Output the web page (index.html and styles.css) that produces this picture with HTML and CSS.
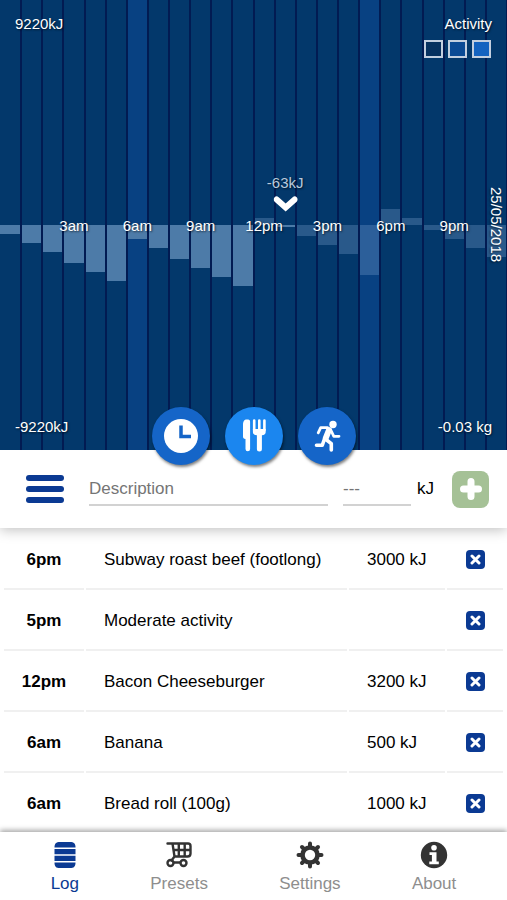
FILE: index.html
```
<!DOCTYPE html>
<html lang="en">
<head>
    <meta charset="UTF-8">
    <meta name="viewport" content="width=device-width, initial-scale=1.0">
    <title>Energy Log</title>
    <link rel="stylesheet" href="styles.css">
</head>
<body>
    <section class="chart">
        <div class="hours">
            <div class="hour"><div class="bar" style="height: 4%"></div></div>
            <div class="hour"><div class="bar" style="height: 8%"></div></div>
            <div class="hour"><div class="bar" style="height: 12%"></div></div>
            <div class="hour"><div class="bar" style="height: 17%"></div><span class="hour-label">3am</span></div>
            <div class="hour"><div class="bar" style="height: 21%"></div></div>
            <div class="hour"><div class="bar" style="height: 25%"></div></div>
            <div class="hour active"><div class="bar" style="height: 6%"></div><span class="hour-label">6am</span></div>
            <div class="hour"><div class="bar" style="height: 10%"></div></div>
            <div class="hour"><div class="bar" style="height: 15%"></div></div>
            <div class="hour"><div class="bar" style="height: 19%"></div><span class="hour-label">9am</span></div>
            <div class="hour"><div class="bar" style="height: 23%"></div></div>
            <div class="hour"><div class="bar" style="height: 27%"></div></div>
            <div class="hour"><div class="bar up future" style="height: 3%"></div><span class="hour-label">12pm</span></div>
            <div class="hour">
                <div class="bar" style="height: 1%"></div>
                <div class="marker">
                    <span>-63kJ</span>
                    <svg width="24" height="16" viewBox="0 0 24 16"><path d="M3 3.5 12 11.5 21 3.5" fill="none" stroke="#fff" stroke-width="6" stroke-linecap="round"/></svg>
                </div>
            </div>
            <div class="hour"><div class="bar future" style="height: 5%"></div></div>
            <div class="hour"><div class="bar future" style="height: 9%"></div><span class="hour-label">3pm</span></div>
            <div class="hour"><div class="bar future" style="height: 13%"></div></div>
            <div class="hour active"><div class="bar future" style="height: 22%"></div></div>
            <div class="hour"><div class="bar up future" style="height: 7%"></div><span class="hour-label">6pm</span></div>
            <div class="hour"><div class="bar up future" style="height: 3%"></div></div>
            <div class="hour"><div class="bar future" style="height: 2%"></div></div>
            <div class="hour"><div class="bar future" style="height: 6%"></div><span class="hour-label">9pm</span></div>
            <div class="hour"><div class="bar future" style="height: 10%"></div></div>
            <div class="hour"><div class="bar future" style="height: 14%"></div></div>
        </div>
        <div class="overlay">
            <div class="overlay-row">
                <span>9220kJ</span>
                <div class="legend">
                    <span>Activity</span>
                    <div class="swatches">
                        <i class="swatch"></i>
                        <i class="swatch medium"></i>
                        <i class="swatch high"></i>
                    </div>
                </div>
            </div>
            <div class="overlay-row">
                <span>-9220kJ</span>
                <span>-0.03 kg</span>
            </div>
        </div>
        <div class="date"><span>25/05/2018</span></div>
        <div class="actions">
            <button class="round" type="button" aria-label="Time">
                <svg width="36" height="36" viewBox="0 0 36 36"><circle cx="18" cy="18" r="17" fill="#fff"/><path d="M18 7.5V18.5H28" fill="none" stroke="#1565c8" stroke-width="3.5"/></svg>
            </button>
            <button class="round food" type="button" aria-label="Food">
                <svg width="36" height="36" viewBox="0 0 36 36" fill="#fff"><path d="M11 1.5C8 1.500 7 3.500 7 7v11.500c0 1.500.7 2.300 2.500 2.500V31a2.300 2.300 0 0 0 4.600 0V3.500c0-1.400-1-2-3.100-2z"/><path d="M18.200 2.500V12M23.300 2.500V12M28.400 2.500V12" fill="none" stroke="#fff" stroke-width="2.600" stroke-linecap="round"/><path d="M16.900 11h12.800v3c0 2-1.200 3-3.800 3.300V31a2.500 2.500 0 0 1-5 0V17.300c-2.800-.3-4-1.300-4-3.300z"/></svg>
            </button>
            <button class="round" type="button" aria-label="Activity">
                <svg width="36" height="36" viewBox="0 0 36 36" fill="none" stroke="#fff" stroke-linecap="round" stroke-linejoin="round"><circle cx="24" cy="6.500" r="3.700" fill="#fff" stroke="none"/><path d="M20 12 16.800 20" stroke-width="6"/><path d="M18.500 9.700H11.700L9.200 14.800M22.300 13 24.800 18.300H30" stroke-width="2.800"/><path d="M15.300 21.500 13.300 27.200H7.500M17 21.500 22.300 25.700V32" stroke-width="3.600"/></svg>
            </button>
        </div>
    </section>
    <form class="entry">
        <button class="menu" type="button" aria-label="Menu"><i></i><i></i><i></i></button>
        <input class="description" type="text" placeholder="Description" aria-label="Description">
        <input class="energy" id="energy" type="text" placeholder="---">
        <label for="energy">kJ</label>
        <button class="add" type="submit" aria-label="Add">
            <svg width="24" height="24" viewBox="0 0 24 24"><path d="M12 4.500v15M4.500 12h15" stroke="#fff" stroke-width="7" stroke-linecap="round"/></svg>
        </button>
    </form>
    <main class="log">
        <table>
            <tr>
                <th scope="row">6pm</th>
                <td>Subway roast beef (footlong)</td>
                <td class="amount">3000 kJ</td>
                <td class="remove"><button type="button" aria-label="Remove"><svg width="11" height="11" viewBox="0 0 11 11"><path d="M2 2 9 9M9 2 2 9"/></svg></button></td>
            </tr>
            <tr>
                <th scope="row">5pm</th>
                <td>Moderate activity</td>
                <td class="amount"></td>
                <td class="remove"><button type="button" aria-label="Remove"><svg width="11" height="11" viewBox="0 0 11 11"><path d="M2 2 9 9M9 2 2 9"/></svg></button></td>
            </tr>
            <tr>
                <th scope="row">12pm</th>
                <td>Bacon Cheeseburger</td>
                <td class="amount">3200 kJ</td>
                <td class="remove"><button type="button" aria-label="Remove"><svg width="11" height="11" viewBox="0 0 11 11"><path d="M2 2 9 9M9 2 2 9"/></svg></button></td>
            </tr>
            <tr>
                <th scope="row">6am</th>
                <td>Banana</td>
                <td class="amount">500 kJ</td>
                <td class="remove"><button type="button" aria-label="Remove"><svg width="11" height="11" viewBox="0 0 11 11"><path d="M2 2 9 9M9 2 2 9"/></svg></button></td>
            </tr>
            <tr>
                <th scope="row">6am</th>
                <td>Bread roll (100g)</td>
                <td class="amount">1000 kJ</td>
                <td class="remove"><button type="button" aria-label="Remove"><svg width="11" height="11" viewBox="0 0 11 11"><path d="M2 2 9 9M9 2 2 9"/></svg></button></td>
            </tr>
        </table>
    </main>
    <nav class="tabs">
        <a class="current" href="#log">
            <svg width="28" height="28" viewBox="0 0 28 28" fill="#0b3a93"><path d="M3.500 6.500C3.500 2.500 5 1 9 1h10c4 0 5.500 1.500 5.500 5.500z"/><path d="M3.500 8h21v5.200h-21zM3.500 14.700h21v5.200h-21zM3.500 21.400h21c0 4-1.500 5.600-5.500 5.600H9c-4 0-5.500-1.600-5.500-5.600z"/></svg>
            <span>Log</span>
        </a>
        <a href="#presets">
            <svg width="28" height="28" viewBox="0 0 28 28" fill="none" stroke="#333" stroke-width="2.400" stroke-linecap="round" stroke-linejoin="round"><path d="M2.500 2.500H23Q25.500 2.500 25.500 5V12.500Q25.500 15.500 22.500 15.500H9.500L7.500 2.500M8.500 9H25.500M13.800 2.500V15.500M19.700 2.500V15.500M9.500 15.500 6.500 19.500M9 21.500H15"/><circle cx="5.500" cy="22" r="3"/><circle cx="18.500" cy="22" r="3"/></svg>
            <span>Presets</span>
        </a>
        <a href="#settings">
            <svg width="28" height="28" viewBox="0 0 28 28"><path d="M14 2.500v23M2.500 14h23M6 6 22 22M22 6 6 22" stroke="#333" stroke-width="4" stroke-linecap="round"/><circle cx="14" cy="14" r="9.800" fill="#333"/><circle cx="14" cy="14" r="5.200" fill="#fff"/></svg>
            <span>Settings</span>
        </a>
        <a href="#about">
            <svg width="28" height="28" viewBox="0 0 28 28"><circle cx="14" cy="14" r="13.200" fill="#333"/><circle cx="14" cy="6.800" r="2.800" fill="#fff"/><path d="M9.500 11.200h7v9.300h2.300v2.800H9.300v-2.800h2.600V14H9.500z" fill="#fff"/></svg>
            <span>About</span>
        </a>
    </nav>
</body>
</html>
```

FILE: styles.css
```
* {
    box-sizing: border-box;
}

body {
    display: flex;
    flex-direction: column;
    height: 100vh;
    margin: 0;
    overflow: hidden;
    font-family: "Liberation Sans", Arial, sans-serif;
    font-size: 17px;
    color: #000;
    background-color: #fff;
}

button {
    display: flex;
    align-items: center;
    justify-content: center;
    padding: 0;
    border: none;
    cursor: pointer;
}

/* chart */
.chart {
    position: relative;
    z-index: 3;
    flex: none;
    height: 50vh;
    font-size: 15px;
    color: #fff;
    text-shadow: 1px 1px 2px rgba(0, 0, 0, 0.6);
    background-color: #03386b;
}

.hours {
    display: grid;
    grid-template-columns: repeat(24, 1fr);
    height: 100%;
}

.hour {
    position: relative;
    display: grid;
    grid-template-rows: 1fr 1fr;
    border: solid #021b52;
    border-width: 0 1px;
}

.hour:first-child {
    border-left: none;
}

.hour.active {
    background-color: #084182;
}

.bar {
    grid-row: 2;
    align-self: start;
    background-color: #4d7ba8;
}

.bar.future {
    background-color: rgba(120, 160, 205, 0.32);
}

.bar.up {
    grid-row: 1;
    align-self: end;
}

.hour-label,
.marker {
    position: absolute;
    top: 50%;
    left: 50%;
    z-index: 1;
    transform: translate(-50%, -50%);
}

.marker {
    top: auto;
    bottom: 50%;
    display: flex;
    flex-direction: column;
    align-items: center;
    gap: 5px;
    padding-bottom: 13px;
    color: #b9c9dc;
    transform: translateX(-50%);
}

.overlay {
    position: absolute;
    inset: 0;
    z-index: 2;
    display: flex;
    flex-direction: column;
    justify-content: space-between;
    padding: 15px;
}

.overlay-row {
    display: flex;
    justify-content: space-between;
}

.legend {
    display: flex;
    flex-direction: column;
    align-items: flex-end;
    gap: 8px;
}

.swatches {
    display: flex;
    gap: 5px;
    padding-right: 1px;
}

.swatch {
    width: 19px;
    height: 18px;
    border: 2px solid #c3cfdf;
    background-color: #06315f;
}

.swatch.medium {
    background-color: #0b4a94;
}

.swatch.high {
    background-color: #1463c0;
}

.date {
    position: absolute;
    inset: 0 2px 0 auto;
    z-index: 2;
    display: flex;
    align-items: center;
    justify-content: center;
    writing-mode: vertical-rl;
}

.actions {
    position: absolute;
    right: 0;
    bottom: -15px;
    left: 0;
    z-index: 3;
    display: flex;
    justify-content: center;
    gap: 15px;
    pointer-events: none;
}

.round {
    width: 58px;
    height: 58px;
    border-radius: 50%;
    background-color: #1565c8;
    box-shadow: 1px 2px 3px rgba(0, 0, 0, 0.5);
    pointer-events: auto;
}

.round.food {
    background-color: #1b86ef;
}

/* new entry */
.entry {
    position: relative;
    z-index: 2;
    display: flex;
    flex: none;
    align-items: center;
    height: 78px;
    padding: 0 18px 0 26px;
    background-color: #fff;
    box-shadow: 0 2px 12px rgba(0, 0, 0, 0.25);
}

.menu {
    flex-direction: column;
    gap: 5px;
    width: 38px;
    margin-right: 25px;
    background: none;
}

.menu i {
    width: 100%;
    height: 6px;
    border-radius: 3px;
    background-color: #0b3a93;
}

.entry input {
    min-width: 0;
    height: 34px;
    padding: 2px 0 0;
    border: none;
    border-bottom: 2px solid #d2d2d2;
    font: inherit;
    background: none;
}

.entry input::placeholder {
    color: #757575;
}

.entry .description {
    flex: 1;
    margin-right: 15px;
}

.entry .energy {
    width: 68px;
    margin-right: 6px;
}

.add {
    width: 37px;
    height: 37px;
    margin-left: 18px;
    border-radius: 8px;
    background-color: #a5c196;
}

/* log */
.log {
    flex: 1;
    min-height: 0;
    padding: 1px 2px 0;
    overflow: hidden;
}

.log table {
    width: 100%;
    border-spacing: 2px;
    table-layout: fixed;
}

.log th,
.log td {
    height: 59px;
    padding: 0;
    border-bottom: 2px solid #f0f0f0;
}

.log th {
    width: 80px;
}

.log td {
    padding-left: 18px;
}

.log .amount {
    width: 96px;
}

.log .remove {
    width: 56px;
    padding: 0;
}

.remove button {
    width: 19px;
    height: 19px;
    margin: 0 auto;
    border-radius: 4px;
    background-color: #0b3a93;
}

.remove path {
    stroke: #fff;
    stroke-width: 3;
    stroke-linecap: round;
}

/* bottom tabs */
.tabs {
    position: relative;
    z-index: 2;
    display: flex;
    flex: none;
    justify-content: space-around;
    height: 68px;
    padding: 9px 15px 0;
    background-color: #fff;
    box-shadow: 0 -2px 5px rgba(0, 0, 0, 0.35);
}

.tabs a {
    display: flex;
    flex-direction: column;
    align-items: center;
    gap: 5px;
    color: #8e8e8e;
    text-decoration: none;
}

.tabs a.current {
    color: #0b3a93;
}
```
